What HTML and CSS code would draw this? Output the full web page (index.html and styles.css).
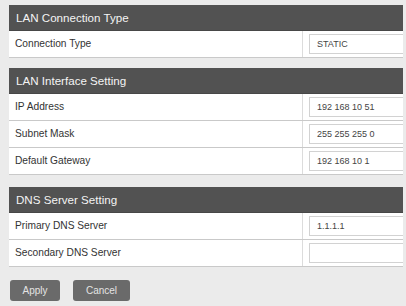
FILE: index.html
```html
<!DOCTYPE html>
<html>
<head>
<meta charset="utf-8">
<link rel="stylesheet" href="styles.css">
</head>
<body>
<div class="page">
  <section class="section">
    <div class="header">LAN Connection Type</div>
    <div class="row">
      <div class="label">Connection Type</div>
      <div class="value"><div class="field">STATIC</div></div>
    </div>
  </section>
  <section class="section">
    <div class="header">LAN Interface Setting</div>
    <div class="row">
      <div class="label">IP Address</div>
      <div class="value"><div class="field">192 168 10 51</div></div>
    </div>
    <div class="row">
      <div class="label">Subnet Mask</div>
      <div class="value"><div class="field">255 255 255 0</div></div>
    </div>
    <div class="row">
      <div class="label">Default Gateway</div>
      <div class="value"><div class="field">192 168 10 1</div></div>
    </div>
  </section>
  <section class="section section-dns">
    <div class="header">DNS Server Setting</div>
    <div class="row">
      <div class="label">Primary DNS Server</div>
      <div class="value"><div class="field">1.1.1.1</div></div>
    </div>
    <div class="row">
      <div class="label">Secondary DNS Server</div>
      <div class="value"><div class="field"></div></div>
    </div>
  </section>
  <div class="actions">
    <button class="btn btn-apply">Apply</button>
    <button class="btn btn-cancel">Cancel</button>
  </div>
</div>
</body>
</html>
```
FILE: styles.css
```css
html, body {
  margin: 0;
  padding: 0;
  background: #ebebeb;
  overflow: hidden;
}
.page {
  width: 394px;
  padding: 5px 3px 0 9px;
  font-family: "Liberation Sans", Arial, sans-serif;
  display: flex;
  flex-direction: column;
  gap: 10px;
}
.section {
  display: flex;
  flex-direction: column;
  background: #fff;
}
.section-dns {
  margin-top: 2px;
}
.header {
  height: 25px;
  background: #525252;
  color: #f4f4f4;
  font-size: 11.6px;
  line-height: 26px;
  padding-left: 7px;
  border-bottom: 1px solid #474747;
}
.row {
  display: flex;
  height: 26px;
  border-bottom: 1px solid #c9c9c9;
}
.label {
  width: 294px;
  border-right: 1px solid #dcdcdc;
  font-size: 10.2px;
  color: #333;
  line-height: 26px;
  padding-left: 6px;
  box-sizing: border-box;
}
.value {
  flex: 1;
  display: flex;
  align-items: center;
  padding-left: 6px;
}
.field {
  flex: 1;
  height: 18px;
  border: 1px solid #d2d2d2;
  border-right: none;
  background: #fff;
  font-size: 9px;
  color: #444;
  line-height: 18px;
  padding-left: 7px;
}
.actions {
  display: flex;
  gap: 13px;
  padding-left: 1px;
  margin-top: 3px;
}
.btn {
  height: 21px;
  border: none;
  border-radius: 3px;
  background: #6a6a6a;
  color: #e4e4e4;
  font-family: "Liberation Sans", Arial, sans-serif;
  font-size: 10px;
  padding: 0;
}
.btn-apply { width: 50px; }
.btn-cancel { width: 57px; }
```
